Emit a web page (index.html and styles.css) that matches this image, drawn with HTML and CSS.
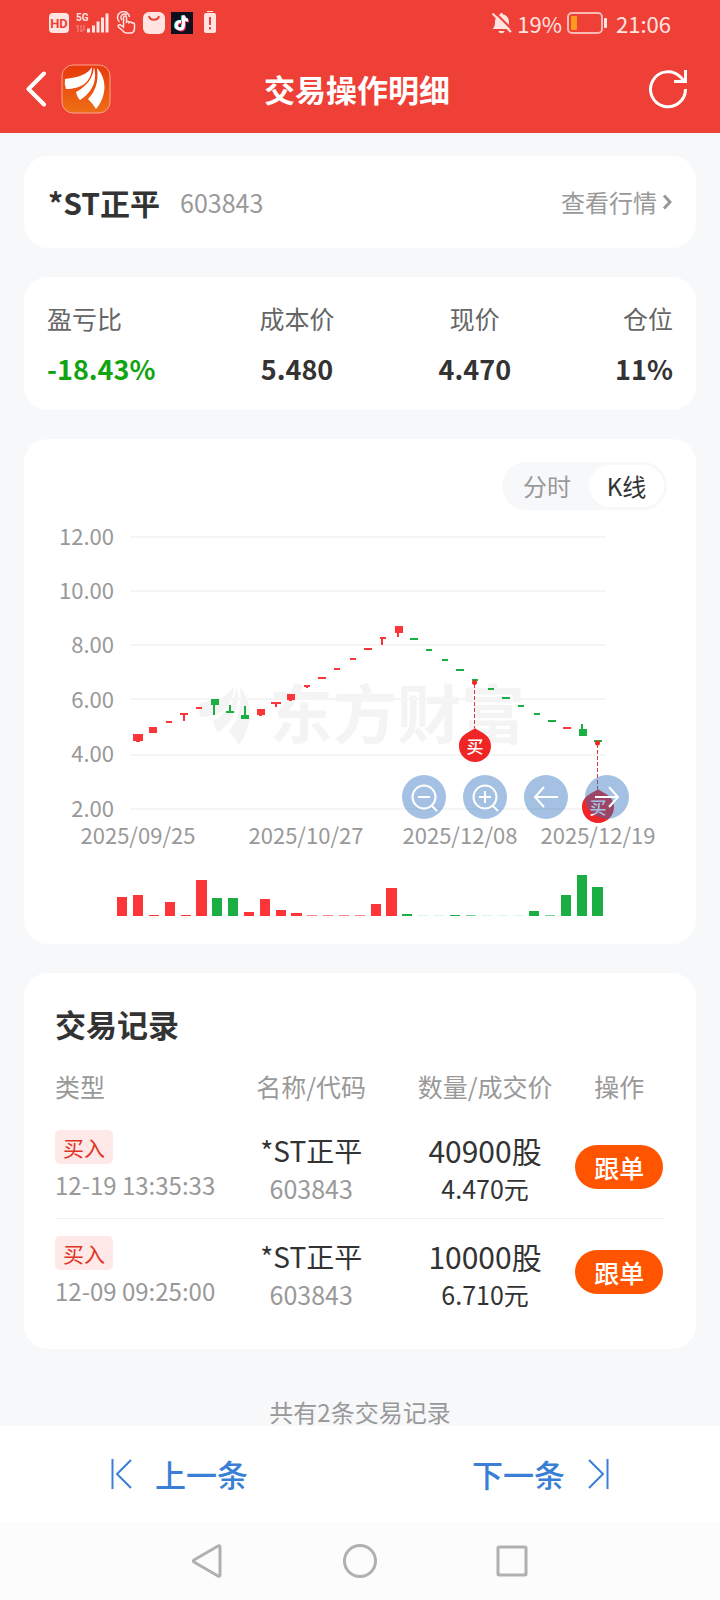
FILE: index.html
```html
<!DOCTYPE html>
<html lang="zh-CN">
<head>
<meta charset="utf-8">
<meta name="viewport" content="width=device-width, initial-scale=1">
<title>交易操作明细</title>
<link rel="stylesheet" href="styles.css">
</head>
<body>
<header class="header">
  <div class="status">
    <div class="status-group status-left">
      <svg width="168" height="24" viewBox="0 0 168 24" aria-hidden="true">
        <rect x="0" y="2" width="20" height="20" rx="4" class="st-fill"/>
        <text x="10" y="17" text-anchor="middle" class="st-hd">HD</text>
        <text x="27" y="10" class="st-5g">5G</text>
        <path d="M29 21V14l-2 2M32 14v7l2-2M35 14v6" class="st-faint"/>
        <path d="M39.500 21.500v-4M44.500 21.500v-7M49 21.500v-11M53.500 21.500v-15M58 21.500v-19" class="st-bars"/>
        <path d="M70.500 11a6 6 0 1 1 10-5M73 9a3.500 3.500 0 0 1 5-5M74.500 14V6.500c0-2 3-2 3 0V11c1-1 2.500-.5 2.500.5 1-1 2.500-.5 3 .5 1-.5 2.500 0 2.500 1.500V17c0 3-1.500 5-4 5h-4c-2 0-3-1-4.500-3l-3.500-3c-1-2 .5-2.500 2-2l3 2z" class="st-line"/>
        <rect x="94" y="1" width="22" height="22" rx="6" class="st-fill"/>
        <path d="M100 5c1 5 9 5 10 0" class="st-red"/>
        <rect x="122" y="1" width="22" height="22" class="st-black"/>
        <path d="M132 10.500c-6 0-6 7.500-1 7.500 2.500 0 3.500-1.500 3.500-4V4.500c.5 3 2 4.500 4.500 4.500" transform="translate(-1 0)" class="st-note st-cyan"/>
        <path d="M132 10.500c-6 0-6 7.500-1 7.500 2.500 0 3.500-1.500 3.500-4V4.500c.5 3 2 4.500 4.500 4.500" transform="translate(1 1)" class="st-note st-pink"/>
        <path d="M132 10.500c-6 0-6 7.500-1 7.500 2.500 0 3.500-1.500 3.500-4V4.500c.5 3 2 4.500 4.500 4.500" class="st-note"/>
        <rect x="158" y="0" width="6" height="1" class="st-fill"/>
        <rect x="155" y="2" width="12" height="20" rx="2" class="st-fill"/>
        <path d="M161 6v8M161 16v2.500" class="st-red"/>
      </svg>
    </div>
    <div class="status-group">
      <svg width="22" height="24" viewBox="0 0 22 24" aria-hidden="true">
        <path d="M1.500 18c2-2 2.500-4 2.500-7 0-4 2.500-7 5-7.500 0-2 3-2 3 0 3.500.5 6 3.500 6 7.500s.5 5 2 7zM7.500 20h6c0 3-6 3-6 0z" class="st-fill"/>
        <path d="M3.500 1l18 18" class="st-gap"/>
        <path d="M1.500 2.500l18.500 18.500" class="st-slash"/>
      </svg>
      <span>19%</span>
      <svg width="42" height="24" viewBox="0 0 42 24" aria-hidden="true">
        <rect x="2" y="2" width="34" height="20" rx="4" class="st-battery"/>
        <rect x="5" y="5" width="6" height="14" rx="1" class="st-level"/>
        <rect x="38" y="7" width="3" height="10" rx="1" class="st-fill"/>
      </svg>
      <time class="clock">21:06</time>
    </div>
  </div>
  <div class="titlebar">
    <div class="title-side">
      <button class="icon-btn" type="button" aria-label="返回">
        <svg width="22" height="36" viewBox="0 0 22 36"><path d="M18 2.500L2.500 18 18 33.500" class="back-line"/></svg>
      </button>
      <svg width="50" height="50" viewBox="0 0 50 50" aria-hidden="true">
        <defs>
          <linearGradient id="logo-bg" x1="0" y1="0" x2="0" y2="1"><stop offset="0" stop-color="#e8380d"/><stop offset="1" stop-color="#ee6f14"/></linearGradient>
          <path id="wing" d="M31 3C26 11 18 13 4 15q-1 5 1 10C20 25 31 18 31 3zM33 3c-1 11-7 19-18 25 1 4 2 6 4 8C30 29 37 18 33 3zM36 4c2 14-2 24-9 31q5 5 8 10C44 35 48 17 36 4z"/>
        </defs>
        <rect x="1" y="1" width="48" height="48" rx="11" fill="url(#logo-bg)" class="logo-edge"/>
        <use href="#wing" class="logo-white"/>
      </svg>
    </div>
    <h1 class="title">交易操作明细</h1>
    <div class="title-side title-end">
      <button class="icon-btn" type="button" aria-label="刷新">
        <svg width="40" height="40" viewBox="0 0 40 40"><path d="M37.500 20a17.500 17.500 0 1 1-5-12l4 4.500M37.500 1v11.500H26" class="refresh-line"/></svg>
      </button>
    </div>
  </div>
</header>

<main class="main">
  <section class="card stock">
    <h2 class="stock-name">*ST正平</h2>
    <span class="stock-code">603843</span>
    <a class="quote" href="#">查看行情<svg width="10" height="16" viewBox="0 0 10 16" aria-hidden="true"><path d="M2 1.500L8 8l-6 6.500"/></svg></a>
  </section>

  <dl class="card stats">
    <div class="stat stat-first"><dt>盈亏比</dt><dd class="loss">-18.43%</dd></div>
    <div class="stat"><dt>成本价</dt><dd>5.480</dd></div>
    <div class="stat"><dt>现价</dt><dd>4.470</dd></div>
    <div class="stat stat-last"><dt>仓位</dt><dd>11%</dd></div>
  </dl>

  <section class="card chart-card">
    <div class="tabs">
      <button class="tab" type="button" aria-pressed="false">分时</button>
      <button class="tab tab-on" type="button" aria-pressed="true">K线</button>
    </div>
    <div class="chart">
      <svg class="chart-svg" viewBox="24 510 672 410" role="img" aria-label="K线图">
        <g class="watermark">
          <use href="#wing" transform="translate(194 682) scale(1.280 1.400)"/>
          <text x="269" y="738">东方财富</text>
        </g>
        <path d="M130 537H606M130 591H606M130 645H606M130 699H606M130 755H606M130 809H606" class="grid"/>
        <g class="axis axis-y">
          <text x="114" y="545">12.00</text><text x="114" y="599">10.00</text><text x="114" y="653">8.00</text>
          <text x="114" y="708">6.00</text><text x="114" y="762">4.00</text><text x="114" y="817">2.00</text>
        </g>
        <g class="axis axis-x">
          <text x="138" y="844">2025/09/25</text><text x="306" y="844">2025/10/27</text>
          <text x="460" y="844">2025/12/08</text><text x="598" y="844">2025/12/19</text>
        </g>
        <path class="up" d="M133 734h10v7h-3v1h-4v-1h-3zM149 727h8v6h-8zM166 721h6v2h-6zM180 713h8v2h-3v6h-2v-6h-3zM196 707h6v2h-6zM257 709h8v6h-3v1h-3v-1h-2zM271 702h10v2h-4v3h-2v-3h-4zM287 694h8v6h-3v1h-3v-1h-2zM304 685h6v2h-2v1h-2v-1h-2zM318 677h8v2h-8zM334 668h6v2h-6zM350 658h6v2h-6zM364 648h8v2h-8zM380 637h6v2h-3v6h-2v-6h-1zM395 626h8v7h-4v4h-2v-4h-2zM563 727h8v2h-8z"/>
        <path class="down" d="M211 699h8v6h-4v10h-2v-10h-2zM226 713v-2h3v-6h2v6h3v2zM241 719v-4h3v-9h2v9h3v4zM410 638h8v2h-8zM426 649h6v2h-6zM442 659h6v2h-6zM456 669h8v2h-8zM472 679h6v2h-6zM488 688h6v2h-6zM502 697h8v2h-8zM518 705h6v2h-6zM534 713h6v2h-6zM548 720h8v2h-8zM579 736v-7h2v-5h2v5h4v7zM594 740h8v2h-8z"/>
        <g class="up">
          <path d="M117 916v-19h10v19zM133 916v-21h10v21zM149 916v-1h10v1zM165 916v-14h10v14zM181 916v-1h10v1zM196 916v-36h11v36zM244 916v-4h10v4zM260 916v-17h10v17zM276 916v-6h10v6zM291 916v-3h11v3zM371 916v-12h10v12zM386 916v-28h11v28z"/>
          <path class="thin" d="M307 916v-1h10v1zM323 916v-1h10v1zM339 916v-1h10v1zM355 916v-1h10v1z"/>
        </g>
        <g class="down">
          <path d="M212 916v-18h10v18zM228 916v-18h10v18zM402 916v-2h10v2zM450 916v-1h10v1zM529 916v-5h10v5zM561 916v-21h10v21zM577 916v-41h10v41zM592 916v-29h11v29z"/>
          <path class="thin" d="M466 916v-1h10v1zM545 916v-1h10v1z"/>
          <path class="faint" d="M418 916v-1h10v1zM434 916v-1h10v1zM482 916v-1h10v1zM497 916v-1h10v1zM513 916v-1h10v1z"/>
        </g>
        <g class="marker">
          <path d="M474.500 684V728M597.500 744V789" class="marker-line"/>
          <circle cx="474.500" cy="682.500" r="2.500"/><circle cx="597.500" cy="743" r="2.500"/>
          <path d="M475 728c4 4 16 6 16 18a16 16 0 0 1-32 0c0-12 12-14 16-18zM598 789c4 4 16 6 16 18a16 16 0 0 1-32 0c0-12 12-14 16-18z"/>
          <text x="475" y="753">买</text><text x="598" y="814">买</text>
        </g>
      </svg>
      <div class="controls">
        <button class="control" type="button" aria-label="缩小"><svg viewBox="0 0 44 44"><circle cx="22" cy="22" r="11.500"/><path d="M16 22h12M29 30l6 6"/></svg></button>
        <button class="control" type="button" aria-label="放大"><svg viewBox="0 0 44 44"><circle cx="22" cy="22" r="11.500"/><path d="M16 22h12M22 16v12M29 30l6 6"/></svg></button>
        <button class="control" type="button" aria-label="左移"><svg viewBox="0 0 44 44"><path d="M34 22H11M20 12L11 22l9 10"/></svg></button>
        <button class="control" type="button" aria-label="右移"><svg viewBox="0 0 44 44"><path d="M10 22h23M24 12l9 10-9 10"/></svg></button>
      </div>
    </div>
  </section>

  <section class="card records">
    <h2 class="records-title">交易记录</h2>
    <table class="table">
      <colgroup><col class="c-type"><col class="c-name"><col class="c-qty"><col class="c-op"></colgroup>
      <thead><tr><th class="left" scope="col">类型</th><th scope="col">名称/代码</th><th scope="col">数量/成交价</th><th scope="col">操作</th></tr></thead>
      <tbody>
        <tr>
          <td class="left"><span class="tag">买入</span><time class="when">12-19 13:35:33</time></td>
          <td><div class="main-line">*ST正平</div><div class="sub-line muted">603843</div></td>
          <td><div class="main-line qty">40900股</div><div class="sub-line">4.470元</div></td>
          <td class="op"><button class="follow" type="button">跟单</button></td>
        </tr>
        <tr>
          <td class="left"><span class="tag">买入</span><time class="when">12-09 09:25:00</time></td>
          <td><div class="main-line">*ST正平</div><div class="sub-line muted">603843</div></td>
          <td><div class="main-line qty">10000股</div><div class="sub-line">6.710元</div></td>
          <td class="op"><button class="follow" type="button">跟单</button></td>
        </tr>
      </tbody>
    </table>
  </section>
  <p class="total">共有2条交易记录</p>
</main>

<nav class="pager">
  <button class="page-btn" type="button"><svg width="22" height="30" viewBox="0 0 22 30" aria-hidden="true"><path d="M1.500 0v30M20 1L6 15l14 14"/></svg>上一条</button>
  <button class="page-btn" type="button">下一条<svg width="22" height="30" viewBox="0 0 22 30" aria-hidden="true"><path d="M20.500 0v30M2 1l14 14L2 29"/></svg></button>
</nav>
<nav class="system">
  <button class="sys-btn" type="button" aria-label="返回"><svg width="36" height="36" viewBox="0 0 36 36"><path d="M30 4v28c0 1-1 1.500-2 1L4 19c-1-.5-1-1.500 0-2L28 3c1-.5 2 0 2 1z"/></svg></button>
  <button class="sys-btn" type="button" aria-label="主页"><svg width="36" height="36" viewBox="0 0 36 36"><circle cx="18" cy="18" r="15.500"/></svg></button>
  <button class="sys-btn" type="button" aria-label="多任务"><svg width="36" height="36" viewBox="0 0 36 36"><rect x="4" y="4" width="28" height="28" rx="1"/></svg></button>
</nav>
</body>
</html>
```
FILE: styles.css
```css
* { box-sizing: border-box; }
body {
  margin: 0;
  min-height: 100vh;
  display: flex;
  flex-direction: column;
  background: #f7f8fa;
  color: #333;
  font: 24px/36px "Noto Sans CJK SC", sans-serif;
}
button {
  margin: 0;
  padding: 0;
  border: 0;
  background: none;
  color: inherit;
  font: inherit;
  cursor: pointer;
}
svg { display: block; }
h1, h2, p, dl, dd { margin: 0; }

/* Header */
.header { background: #ee4036; color: #fff; }
.status {
  height: 46px;
  padding: 0 49px;
  display: flex;
  justify-content: space-between;
  align-items: center;
  color: #ffe4e2;
  font-size: 22px;
  line-height: 24px;
}
.status-group { display: flex; align-items: center; gap: 4px; }
.clock { margin-left: 4px; }
.st-fill { fill: #ffe4e2; }
.st-hd { fill: #ee4036; font: 700 13px Roboto, sans-serif; }
.st-5g { fill: #ffe4e2; font: 700 10px Roboto, sans-serif; }
.st-faint { fill: none; stroke: #f58d87; }
.st-bars { stroke: #ffe4e2; stroke-width: 3; }
.st-line { fill: none; stroke: #ffe4e2; stroke-width: 1.5; }
.st-red { fill: none; stroke: #ee4036; stroke-width: 2; }
.st-black { fill: #10101c; }
.st-note { fill: none; stroke: #fff; stroke-width: 3; }
.st-cyan { stroke: #35e5e0; }
.st-pink { stroke: #f0305c; }
.st-gap { stroke: #ee4036; stroke-width: 2; }
.st-slash { stroke: #ffe4e2; stroke-width: 2; }
.st-battery { fill: none; stroke: #f9b9b5; stroke-width: 2; }
.st-level { fill: #fb9a1c; }
.titlebar {
  height: 87px;
  padding: 0 26px 2px;
  display: flex;
  align-items: center;
}
.title-side { flex: 1; display: flex; align-items: center; gap: 13px; }
.title-end { justify-content: flex-end; padding-right: 6px; }
.title { font-size: 31px; line-height: 44px; font-weight: 700; }
.back-line { fill: none; stroke: #fff; stroke-width: 4; stroke-linecap: round; stroke-linejoin: round; }
.refresh-line { fill: none; stroke: #fff; stroke-width: 3; }
.logo-edge { stroke: #f9a58c; stroke-width: 1; }
.logo-white { fill: #fff; }

/* Cards */
.main {
  flex: 1;
  padding: 23px 24px 0;
  display: flex;
  flex-direction: column;
  gap: 29px;
}
.card { background: #fff; border-radius: 24px; }
.stock { height: 92px; padding: 0 24px; display: flex; align-items: center; gap: 20px; }
.stock-name { font-size: 30px; line-height: 44px; }
.stock-code { color: #999; font-size: 25px; }
.quote {
  margin-left: auto;
  display: flex;
  align-items: center;
  gap: 5px;
  color: #999;
  text-decoration: none;
}
.quote path { fill: none; stroke: #999; stroke-width: 3; }
.stats { padding: 22px 23px; display: flex; justify-content: space-between; height: 133px; }
.stat { text-align: center; }
.stat-first { text-align: left; }
.stat-last { text-align: right; }
.stat dt { font-size: 25px; line-height: 38px; color: #666; }
.stat dd { margin-top: 12px; font-size: 27px; line-height: 40px; font-weight: 700; }
.stat .loss { color: #10a510; }

/* Chart */
.chart-card { padding: 23px 0 24px; }
.tabs {
  width: fit-content;
  height: 48px;
  margin: 0 29px 0 auto;
  padding: 3px;
  display: flex;
  border-radius: 24px;
  background: #f7f8fa;
}
.tab { width: 84px; border-radius: 22px; color: #999; font-size: 24px; }
.tab-on { width: 75px; background: #fff; color: #333; }
.chart { position: relative; }
.chart-svg { width: 100%; height: auto; }
.watermark { fill: #f4f4f4; }
.watermark text { font-size: 64px; font-weight: 700; }
.grid { stroke: #f5f5f5; stroke-width: 2; }
.axis { fill: #999; font-size: 22px; }
.axis-y { text-anchor: end; }
.axis-x { text-anchor: middle; }
.up { fill: #fc3539; }
.down { fill: #1bae42; }
.thin { opacity: .6; }
.faint { opacity: .15; }
.marker { fill: #f02626; }
.marker-line { stroke: #d83a3a; stroke-dasharray: 4 2; }
.marker text { fill: #fff; font-size: 17px; font-weight: 500; text-anchor: middle; }
.controls {
  position: absolute;
  top: 64.6%;
  left: 56.25%;
  display: flex;
  gap: 17px;
}
.control { width: 44px; height: 44px; border-radius: 50%; background: rgba(43, 111, 190, .43); }
.control svg { fill: none; stroke: #fff; stroke-width: 2; }

/* Records */
.records { padding: 29px 31px 26px; }
.records-title { font-size: 31px; line-height: 44px; }
.table { width: 100%; margin-top: 18px; border-collapse: collapse; table-layout: fixed; text-align: center; }
.c-type { width: 28%; }
.c-name { width: 28%; }
.c-qty { width: 29%; }
.c-op { width: 15%; }
.table th { height: 49px; padding: 0 0 5px; color: #999; font-size: 25px; font-weight: 400; white-space: nowrap; }
.table td { height: 105px; padding: 17px 0 11px; vertical-align: top; white-space: nowrap; }
.table tr + tr td { border-top: 1px solid #eee; }
.table .left { text-align: left; }
.table .op { padding: 3px 0 0; vertical-align: middle; }
.tag {
  display: block;
  width: fit-content;
  padding: 0 8px;
  border-radius: 5px;
  background: #ffe9e8;
  color: #e03426;
  font-size: 21px;
  line-height: 34px;
}
.when { display: block; margin-top: 3px; color: #999; font-size: 24px; }
.main-line { font-size: 28px; line-height: 40px; }
.qty { font-size: 30px; }
.sub-line { font-size: 25px; }
.muted { color: #999; }
.follow { width: 88px; height: 44px; border-radius: 22px; background: #ff5500; color: #fff; font-size: 25px; font-weight: 500; }
.total { margin-top: 20px; line-height: 28px; color: #999; text-align: center; }

/* Bottom bars */
.pager { height: 96px; padding: 0 111px; display: flex; justify-content: space-between; align-items: center; background: #fff; }
.page-btn { display: flex; align-items: center; gap: 22px; color: #3a7fd5; font-size: 31px; line-height: 44px; font-weight: 500; }
.page-btn path { fill: none; stroke: #3a7fd5; stroke-width: 2; }
.system { height: 78px; display: flex; justify-content: center; align-items: center; gap: 116px; background: #fcfcfc; }
.sys-btn path, .sys-btn circle, .sys-btn rect { fill: none; stroke: #b0b0b0; stroke-width: 3; }
```
